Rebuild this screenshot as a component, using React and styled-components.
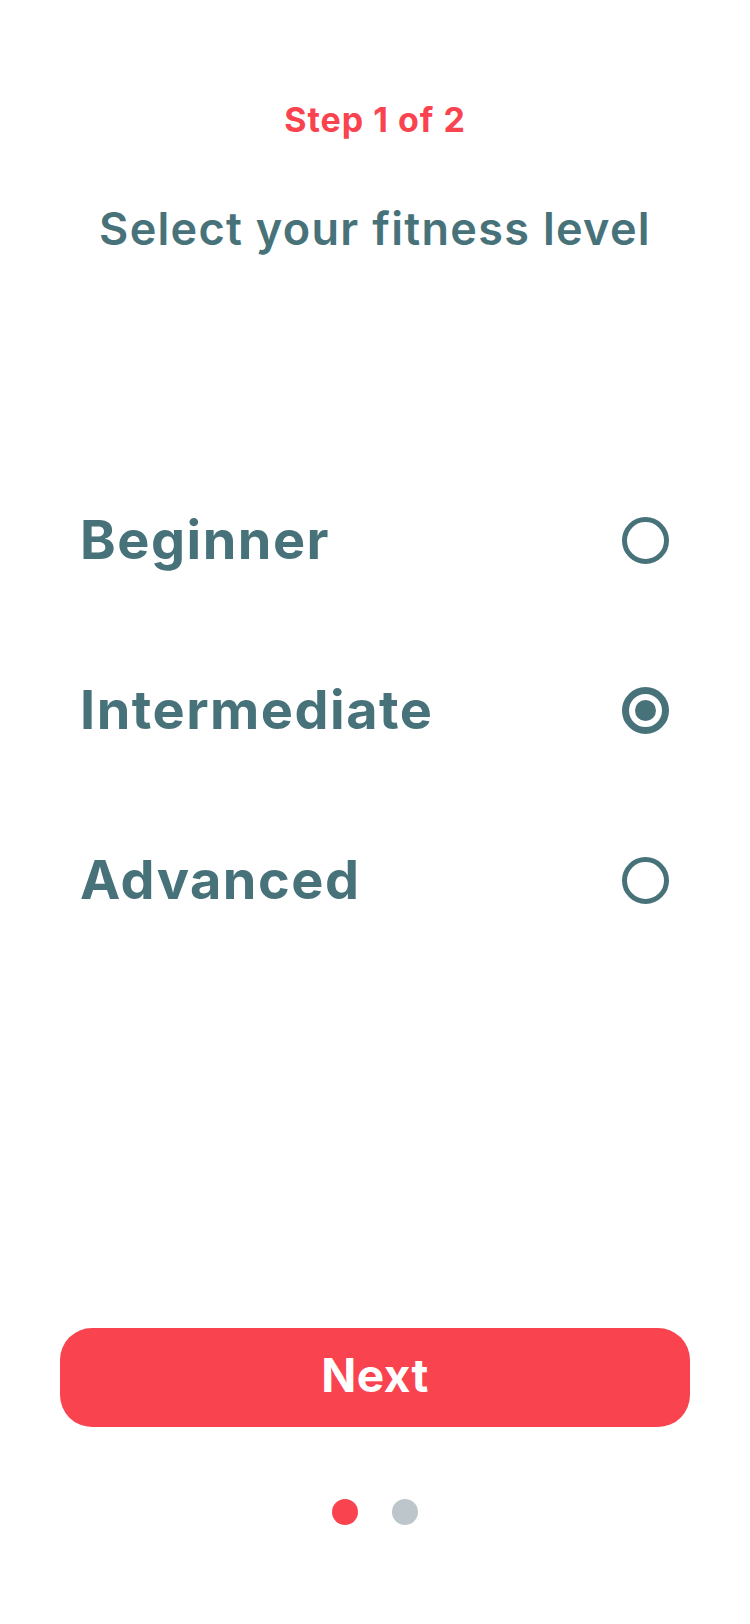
import React, { useState } from "react";
import styled, { createGlobalStyle } from "styled-components";

const GlobalStyle = createGlobalStyle`
  html, body {
    margin: 0;
    padding: 0;
    background: #ffffff;
  }
  * {
    box-sizing: border-box;
  }
`;

const levels = ["Beginner", "Intermediate", "Advanced"];

const App = () => {
  const [selected, setSelected] = useState("Intermediate");

  return (
    <>
      <GlobalStyle />
      <Screen>
        <Header>
          <StepLabel>Step 1 of 2</StepLabel>
          <Title>Select your fitness level</Title>
        </Header>
        <Options>
          {levels.map((level) => (
            <OptionRow key={level} onClick={() => setSelected(level)}>
              <OptionLabel>{level}</OptionLabel>
              <Radio checked={selected === level}>
                {selected === level && <RadioDot />}
              </Radio>
            </OptionRow>
          ))}
        </Options>
        <Spacer />
        <NextButton>Next</NextButton>
        <Dots>
          <Dot active />
          <Dot />
        </Dots>
      </Screen>
    </>
  );
};

export default App;

const Screen = styled.div`
  display: flex;
  flex-direction: column;
  height: 1624px;
  padding: 103px 60px 99px;
  font-family: Inter, "Noto Sans", sans-serif;
`;

const Header = styled.div`
  display: flex;
  flex-direction: column;
  align-items: center;
`;

const StepLabel = styled.div`
  font-size: 34px;
  line-height: 34px;
  font-weight: 700;
  color: #f94450;
  letter-spacing: 1px;
`;

const Title = styled.h1`
  margin: 71px 0 0;
  font-size: 45px;
  line-height: 42px;
  font-weight: 600;
  color: #48727a;
  letter-spacing: 1.3px;
`;

const Options = styled.div`
  display: flex;
  flex-direction: column;
  margin-top: 205px;
`;

const OptionRow = styled.div`
  display: flex;
  align-items: center;
  justify-content: space-between;
  height: 170px;
  padding: 0 21px 0 20px;
  cursor: pointer;
`;

const OptionLabel = styled.span`
  font-size: 54px;
  line-height: 54px;
  font-weight: 700;
  color: #48727a;
  letter-spacing: 1.5px;
`;

const Radio = styled.div`
  display: flex;
  align-items: center;
  justify-content: center;
  width: 47px;
  height: 47px;
  border-radius: 50%;
  border: ${(p) => (p.checked ? "7px" : "5px")} solid #48727a;
`;

const RadioDot = styled.div`
  width: 21px;
  height: 21px;
  border-radius: 50%;
  background: #48727a;
`;

const Spacer = styled.div`
  flex: 1;
`;

const NextButton = styled.button`
  height: 99px;
  width: 100%;
  padding: 0 0 6px;
  border: none;
  border-radius: 32px;
  background: #f94450;
  color: #ffffff;
  font-family: inherit;
  font-size: 46px;
  font-weight: 700;
  letter-spacing: 0.5px;
  cursor: pointer;
`;

const Dots = styled.div`
  display: flex;
  justify-content: center;
  gap: 34px;
  margin-top: 72px;
`;

const Dot = styled.span`
  width: 26px;
  height: 26px;
  border-radius: 50%;
  background: ${(p) => (p.active ? "#f94450" : "#bdc6cb")};
`;
